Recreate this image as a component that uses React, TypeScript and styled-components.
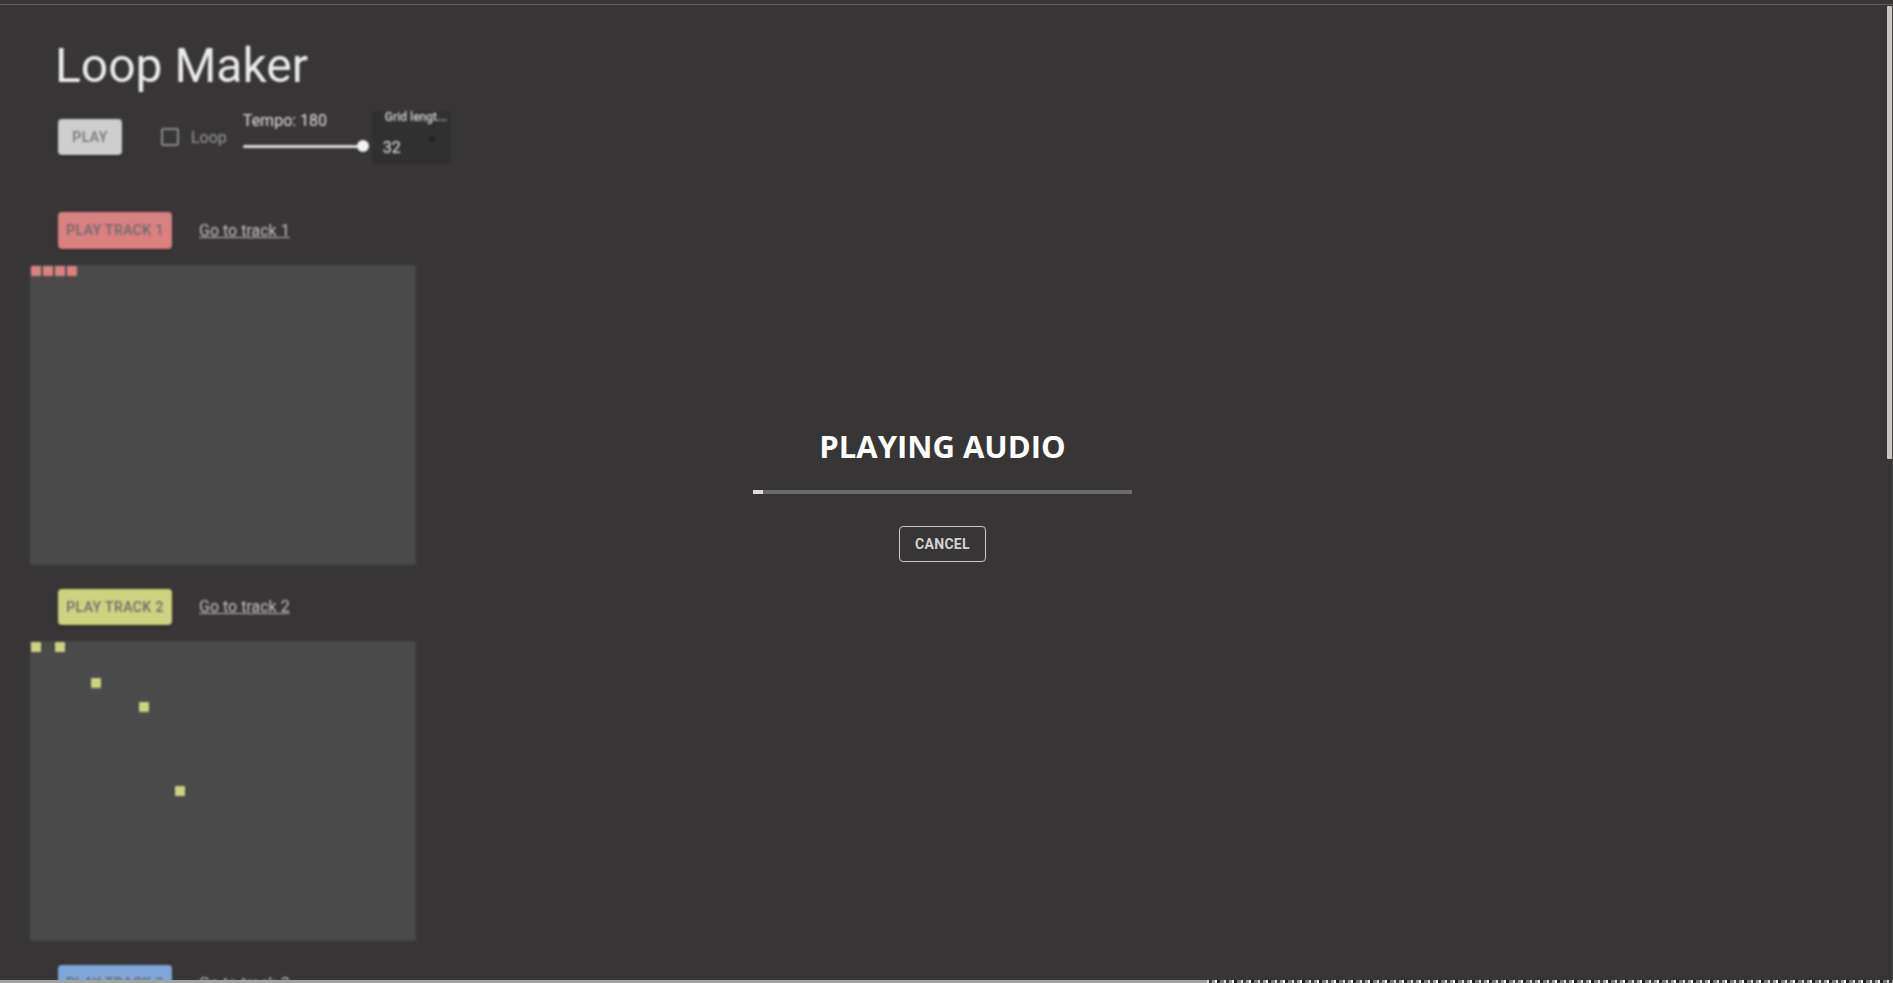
import React from "react";
import styled, { createGlobalStyle } from "styled-components";

const BG = "#373536";

const GlobalStyle = createGlobalStyle`
  html, body {
    margin: 0;
    padding: 0;
    height: 100%;
    overflow: hidden;
    background: ${BG};
  }
  body {
    font-family: Roboto, "Noto Sans", Arial, sans-serif;
  }
  * {
    box-sizing: border-box;
  }
`;

interface Note {
  col: number;
  row: number;
}

interface Track {
  id: number;
  color: string;
  notes: Note[];
}

const TRACKS: Track[] = [
  {
    id: 1,
    color: "#d98081",
    notes: [
      { col: 0, row: 0 },
      { col: 1, row: 0 },
      { col: 2, row: 0 },
      { col: 3, row: 0 },
    ],
  },
  {
    id: 2,
    color: "#cdd37f",
    notes: [
      { col: 0, row: 0 },
      { col: 2, row: 0 },
      { col: 5, row: 3 },
      { col: 9, row: 5 },
      { col: 12, row: 12 },
    ],
  },
  { id: 3, color: "#80a7d9", notes: [{ col: 4, row: 2 }] },
];

const progress = 0.026;

export default function App(): JSX.Element {
  return (
    <>
      <GlobalStyle />
      <Shell>
        <TopEdge />
        <Body>
          <Viewport>
            <Page>
              <Header>
                <Title>Loop Maker</Title>
                <Controls>
                  <PlayButton>Play</PlayButton>
                  <CheckBox />
                  <LoopLabel>Loop</LoopLabel>
                  <Tempo>
                    <TempoLabel>Tempo: 180</TempoLabel>
                    <Slider>
                      <SliderTrack />
                      <SliderThumb />
                    </Slider>
                  </Tempo>
                  <Select>
                    <SelectLabel>Grid lengt...</SelectLabel>
                    <SelectValue>
                      <span>32</span>
                      <Arrow />
                    </SelectValue>
                  </Select>
                </Controls>
              </Header>

              <TrackList>
                {TRACKS.map((track) => (
                  <section key={track.id}>
                    <TrackHead>
                      <PlayTrackButton $color={track.color}>
                        Play track {track.id}
                      </PlayTrackButton>
                      <GoLink href={`#track-${track.id}`}>
                        Go to track {track.id}
                      </GoLink>
                    </TrackHead>
                    <NoteGrid id={`track-${track.id}`}>
                      {track.notes.map((n) => (
                        <NoteCell
                          key={`${n.col}-${n.row}`}
                          $color={track.color}
                          $col={n.col}
                          $row={n.row}
                        />
                      ))}
                    </NoteGrid>
                  </section>
                ))}
              </TrackList>
            </Page>

            <Overlay>
              <OverlayTitle>PLAYING AUDIO</OverlayTitle>
              <Progress>
                <ProgressFill style={{ width: `${progress * 100}%` }} />
              </Progress>
              <CancelButton>Cancel</CancelButton>
            </Overlay>
          </Viewport>
          <Rail>
            <Thumb />
          </Rail>
        </Body>
        <BottomEdge />
      </Shell>
    </>
  );
}

const Shell = styled.div`
  display: flex;
  flex-direction: column;
  height: 100vh;
`;

const TopEdge = styled.div`
  height: 5px;
  flex: none;
  background: ${BG};
  border-bottom: 1px solid #5e5e5e;
`;

const Body = styled.div`
  flex: 1;
  min-height: 0;
  display: flex;
`;

const Viewport = styled.main`
  flex: 1;
  position: relative;
  overflow: hidden;
  background: ${BG};
`;

const Page = styled.div`
  filter: blur(1.1px);
  padding: 33px 0 0 30px;
`;

const Header = styled.header`
  margin-left: 20px;
`;

const Title = styled.h1`
  margin: 0;
  padding-left: 5px;
  font: 400 48px/56px Roboto, sans-serif;
  color: #ececec;
`;

const Controls = styled.div`
  display: flex;
  align-items: center;
  height: 52px;
  margin-top: 17px;
`;

const PlayButton = styled.button`
  margin-left: 8px;
  width: 64px;
  height: 36.5px;
  border: none;
  border-radius: 4px;
  background: #cecece;
  color: #747474;
  font: 500 14px Roboto, sans-serif;
  letter-spacing: 0.4px;
  text-transform: uppercase;
  box-shadow: 0 2px 2px rgba(0, 0, 0, 0.25);
`;

const CheckBox = styled.span`
  margin-left: 39px;
  width: 18px;
  height: 18px;
  border: 2px solid #8c8c8c;
  border-radius: 2px;
`;

const LoopLabel = styled.span`
  margin-left: 12px;
  font-size: 16px;
  color: #9b9b9b;
`;

const Tempo = styled.div`
  display: flex;
  flex-direction: column;
  margin-left: 16px;
  margin-top: -6px;
`;

const TempoLabel = styled.span`
  font-size: 16px;
  line-height: 24px;
  color: #e2e2e2;
`;

const Slider = styled.div`
  display: flex;
  align-items: center;
  height: 27px;
`;

const SliderTrack = styled.div`
  width: 120px;
  height: 3px;
  border-radius: 2px;
  background: #dedede;
`;

const SliderThumb = styled.div`
  width: 12px;
  height: 12px;
  margin-left: -6px;
  border-radius: 50%;
  background: #f2f2f2;
`;

const Select = styled.div`
  margin-left: 3px;
  width: 79px;
  height: 52px;
  background: #313031;
  border-bottom: 1px solid #2b2a2b;
`;

const SelectLabel = styled.div`
  padding-left: 13px;
  font: 500 12px/12px Roboto, sans-serif;
  color: #d6d6d6;
  white-space: nowrap;
`;

const SelectValue = styled.div`
  display: flex;
  justify-content: space-between;
  align-items: flex-start;
  margin-top: 12.5px;
  padding: 0 15px 0 11px;
  font-size: 16px;
  line-height: 24px;
  color: #e6e6e6;
`;

const Arrow = styled.span`
  margin-top: 1.5px;
  width: 0;
  height: 0;
  border-left: 4.5px solid transparent;
  border-right: 4.5px solid transparent;
  border-top: 5px solid #1c1c1c;
`;

const TrackList = styled.div`
  display: flex;
  flex-direction: column;
  gap: 24px;
  margin-top: 49px;
`;

const TrackHead = styled.div`
  display: flex;
  align-items: center;
  height: 36.5px;
  padding-left: 28px;
`;

const PlayTrackButton = styled.button<{ $color: string }>`
  width: 114px;
  height: 36.5px;
  border: none;
  border-radius: 4px;
  background: ${(p) => p.$color};
  color: #6a6a6a;
  font: 500 14px Roboto, sans-serif;
  letter-spacing: 0.4px;
  text-transform: uppercase;
  white-space: nowrap;
  padding: 0;
  box-shadow: 0 2px 2px rgba(0, 0, 0, 0.25);
`;

const GoLink = styled.a`
  margin-left: 27px;
  font-size: 16px;
  color: #c4c4c4;
  text-decoration: underline;
`;

const NoteGrid = styled.div`
  margin-top: 16px;
  width: 386px;
  height: 300px;
  padding: 1px;
  background: #4a4a4a;
  display: grid;
  grid-template-columns: repeat(32, 10px);
  grid-template-rows: repeat(25, 10px);
  gap: 2px;
  justify-content: start;
  align-content: start;
`;

const NoteCell = styled.div<{ $color: string; $col: number; $row: number }>`
  grid-column: ${(p) => p.$col + 1};
  grid-row: ${(p) => p.$row + 1};
  border-radius: 1px;
  background: ${(p) => p.$color};
`;

const Overlay = styled.div`
  position: absolute;
  inset: 0;
  display: flex;
  flex-direction: column;
  align-items: center;
  justify-content: center;
  padding-top: 5px;
`;

const OverlayTitle = styled.h2`
  margin: 0;
  font: 700 31px/36px "Open Sans", "Noto Sans", sans-serif;
  color: #ffffff;
`;

const Progress = styled.div`
  display: flex;
  width: 379px;
  height: 4px;
  margin-top: 26px;
  background: #6b6b6b;
`;

const ProgressFill = styled.div`
  height: 100%;
  background: #dcdcdc;
`;

const CancelButton = styled.button`
  margin-top: 32px;
  width: 87px;
  height: 36px;
  border: 1px solid #c9c9c9;
  border-radius: 4px;
  background: transparent;
  color: #d2d2d2;
  font: 700 14px Roboto, sans-serif;
  letter-spacing: 0.3px;
  text-transform: uppercase;
`;

const Rail = styled.div`
  flex: none;
  width: 8px;
  padding: 1px 1px 0 2px;
  background: ${BG};
  box-shadow: inset -1px 0 0 #464646;
`;

const Thumb = styled.div`
  width: 5px;
  height: 453px;
  border-radius: 1px;
  background: #cac5c1;
`;

const BottomEdge = styled.div`
  height: 3px;
  flex: none;
  background: linear-gradient(90deg, #a2a2a2 0, #a2a2a2 1207px, transparent 1207px),
    repeating-linear-gradient(
      90deg,
      #d8d8d8 0 2px,
      #3a3a3a 2px 5px,
      #9a9a9a 5px 8px,
      #f0f0f0 8px 10px,
      #202020 10px 13px,
      #777777 13px 17px
    );
`;
